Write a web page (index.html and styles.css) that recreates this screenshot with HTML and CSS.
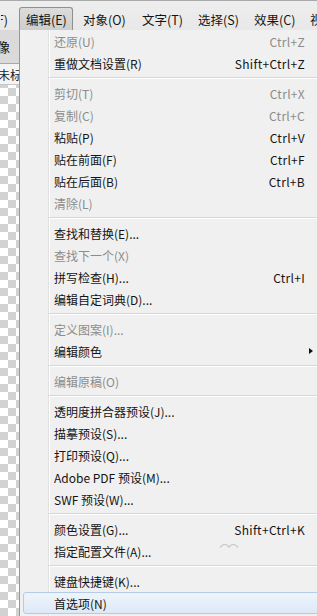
FILE: index.html
```html
<!DOCTYPE html>
<html lang="zh">
<head>
<meta charset="utf-8">
<link rel="stylesheet" href="styles.css">
</head>
<body>
<div class="screen">
  <div class="menubar">
    <span class="mb-item mb-cut">F)</span>
    <span class="mb-item mb-active">编辑(E)</span>
    <span class="mb-item mb-wide">对象(O)</span>
    <span class="mb-item">文字(T)</span>
    <span class="mb-item">选择(S)</span>
    <span class="mb-item">效果(C)</span>
    <span class="mb-item">视图</span>
  </div>
  <div class="main">
    <div class="side">
      <div class="side-tab"><span class="side-tab-text">像</span></div>
      <div class="side-doc"><span class="side-doc-text">未标题</span></div>
      <div class="side-canvas"></div>
    </div>
    <div class="menu">
      <div class="item off"><span>还原(U)</span><span class="key">Ctrl+Z</span></div>
      <div class="item"><span>重做文档设置(R)</span><span class="key">Shift+Ctrl+Z</span></div>
      <div class="sep"></div>
      <div class="item off"><span>剪切(T)</span><span class="key">Ctrl+X</span></div>
      <div class="item off"><span>复制(C)</span><span class="key">Ctrl+C</span></div>
      <div class="item"><span>粘贴(P)</span><span class="key">Ctrl+V</span></div>
      <div class="item"><span>贴在前面(F)</span><span class="key">Ctrl+F</span></div>
      <div class="item"><span>贴在后面(B)</span><span class="key">Ctrl+B</span></div>
      <div class="item off"><span>清除(L)</span></div>
      <div class="sep"></div>
      <div class="item"><span>查找和替换(E)...</span></div>
      <div class="item off"><span>查找下一个(X)</span></div>
      <div class="item"><span>拼写检查(H)...</span><span class="key">Ctrl+I</span></div>
      <div class="item"><span>编辑自定词典(D)...</span></div>
      <div class="sep"></div>
      <div class="item off"><span>定义图案(I)...</span></div>
      <div class="item"><span>编辑颜色</span><span class="arrow"></span></div>
      <div class="sep"></div>
      <div class="item off"><span>编辑原稿(O)</span></div>
      <div class="sep"></div>
      <div class="item"><span>透明度拼合器预设(J)...</span></div>
      <div class="item"><span>描摹预设(S)...</span></div>
      <div class="item"><span>打印预设(Q)...</span></div>
      <div class="item"><span>Adobe PDF 预设(M)...</span></div>
      <div class="item"><span>SWF 预设(W)...</span></div>
      <div class="sep"></div>
      <div class="item"><span>颜色设置(G)...</span><span class="key">Shift+Ctrl+K</span></div>
      <div class="item"><span>指定配置文件(A)...</span></div>
      <div class="sep"></div>
      <div class="item"><span>键盘快捷键(K)...</span></div>
      <div class="item hot"><span>首选项(N)</span></div>
      <svg class="squiggle" width="22" height="8" viewBox="0 0 22 8"><path d="M1 6.5 Q5.5 0.5 10 6 Q14.5 0.5 19 6.5" fill="none" stroke="#c9c9c9" stroke-width="1.4"/></svg>
    </div>
  </div>
</div>
</body>
</html>
```

FILE: styles.css
```css
html, body {
  margin: 0;
  padding: 0;
}
body {
  width: 317px;
  height: 616px;
  overflow: hidden;
  background: #f0f0f0;
  font-family: "Noto Sans CJK SC", "Microsoft YaHei", "Noto Sans", sans-serif;
  font-size: 12px;
  color: #141414;
}
.screen {
  width: 317px;
  height: 616px;
  display: flex;
  flex-direction: column;
  overflow: hidden;
}
.menubar {
  height: 30px;
  flex: none;
  box-sizing: border-box;
  padding-top: 6px;
  display: flex;
  gap: 2px;
  background: linear-gradient(#eeeeee, #e8e8e8);
  border-top: 1px solid #a9a9a9;
  white-space: nowrap;
}
.mb-item {
  flex: none;
  box-sizing: border-box;
  width: 54px;
  height: 23px;
  padding-left: 7px;
  display: flex;
  align-items: center;
  border: 1px solid transparent;
  border-bottom: none;
  color: #151515;
  font-size: 12.5px;
}
.mb-cut {
  width: 17px;
  padding-left: 0;
  justify-content: flex-end;
  padding-right: 8px;
  overflow: hidden;
}
.mb-wide { width: 57px; }
.mb-active {
  padding-left: 6px;
  border-color: #8f8f8f;
  border-radius: 3px 3px 0 0;
  background: linear-gradient(#dcdcdc, #cdcdcd);
}
.main {
  flex: 1;
  display: flex;
  min-height: 0;
}
.side {
  width: 19px;
  flex: none;
  display: flex;
  flex-direction: column;
  overflow: hidden;
}
.side-tab {
  height: 34px;
  flex: none;
  box-sizing: border-box;
  background: #dadada;
  border-bottom: 1px solid #a8a8a8;
  display: flex;
  align-items: center;
  overflow: hidden;
}
.side-tab-text {
  margin-left: -3px;
  font-size: 13px;
  color: #111;
}
.side-doc {
  height: 20px;
  flex: none;
  background: #f4f4f4;
  border-bottom: 1px solid #c8c8c8;
  display: flex;
  align-items: center;
  overflow: hidden;
  white-space: nowrap;
}
.side-doc-text {
  margin-left: -2px;
  font-size: 12px;
  color: #222;
}
.side-canvas {
  flex: 1;
  background-color: #ffffff;
  background-image: conic-gradient(#d2d2d2 25%, transparent 0 50%, #d2d2d2 0 75%, transparent 0);
  background-size: 16px 16px;
  background-position: 0 3px;
}
.menu {
  position: relative;
  flex: 1;
  border-left: 1px solid #979797;
  background-color: #f0f0f0;
  background-image: linear-gradient(to right, transparent 28px, #e1e1e1 28px, #e1e1e1 29px, #ffffff 29px, #ffffff 30px, transparent 30px);
  display: flex;
  flex-direction: column;
}
.item {
  height: 22px;
  box-sizing: border-box;
  margin-left: 3px;
  margin-right: -4px;
  padding-left: 30px;
  padding-right: 15px;
  display: flex;
  align-items: center;
  justify-content: space-between;
  border: 1px solid transparent;
  border-radius: 3px;
  white-space: nowrap;
  color: #141414;
}
.item.off { color: #8c8c8c; }
.key {
  letter-spacing: 0.3px;
}
.arrow {
  width: 0;
  height: 0;
  margin-right: -8px;
  border-top: 3.5px solid transparent;
  border-bottom: 3.5px solid transparent;
  border-left: 4px solid #111;
}
.item.hot {
  border-color: #b3cbe6;
  background: linear-gradient(#eef4fb, #dde9f7);
}
.sep {
  height: 8px;
  flex: none;
  box-sizing: border-box;
  margin-left: 29px;
  background: linear-gradient(transparent 3px, #d7d7d7 3px, #d7d7d7 4px, #ffffff 4px, #ffffff 5px, transparent 5px);
}
.squiggle {
  position: absolute;
  left: 199px;
  top: 511px;
}
```
